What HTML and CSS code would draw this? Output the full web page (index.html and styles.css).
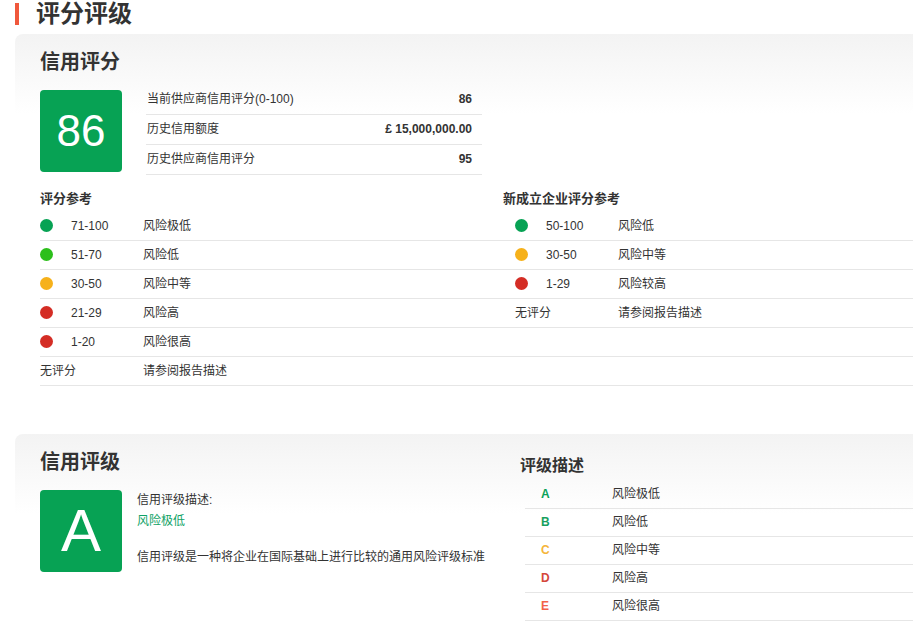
FILE: index.html
```html
<!DOCTYPE html>
<html lang="zh-CN">
<head>
    <meta charset="UTF-8">
    <meta name="viewport" content="width=device-width, initial-scale=1.0">
    <title>评分评级</title>
    <link rel="stylesheet" href="styles.css">
</head>
<body>
    <h1 class="page-title">评分评级</h1>

    <div class="card">
        <h2 class="card-title">信用评分</h2>
        <div class="score-row">
            <div class="score-box">86</div>
            <div class="score-table">
                <div class="score-line"><span>当前供应商信用评分(0-100)</span><b>86</b></div>
                <div class="score-line"><span>历史信用额度</span><b>£ 15,000,000.00</b></div>
                <div class="score-line"><span>历史供应商信用评分</span><b>95</b></div>
            </div>
        </div>

        <div class="ref">
            <div class="ref-new">
                <h3 class="ref-title">新成立企业评分参考</h3>
                <div class="ref-line"><i class="dot green"></i><span class="range">50-100</span>风险低</div>
                <div class="ref-line"><i class="dot yellow"></i><span class="range">30-50</span>风险中等</div>
                <div class="ref-line"><i class="dot red"></i><span class="range">1-29</span>风险较高</div>
                <div class="ref-line"><span class="none">无评分</span>请参阅报告描述</div>
            </div>
            <h3 class="ref-title">评分参考</h3>
            <div class="ref-line"><i class="dot green"></i><span class="range">71-100</span>风险极低</div>
            <div class="ref-line"><i class="dot lime"></i><span class="range">51-70</span>风险低</div>
            <div class="ref-line"><i class="dot yellow"></i><span class="range">30-50</span>风险中等</div>
            <div class="ref-line"><i class="dot red"></i><span class="range">21-29</span>风险高</div>
            <div class="ref-line"><i class="dot red"></i><span class="range">1-20</span>风险很高</div>
            <div class="ref-line"><span class="none">无评分</span>请参阅报告描述</div>
        </div>
    </div>

    <div class="card">
        <div class="rating">
            <div class="rating-main">
                <h2 class="card-title">信用评级</h2>
                <div class="rating-row">
                    <div class="score-box grade">A</div>
                    <div class="rating-info">
                        <p>信用评级描述:</p>
                        <p class="good">风险极低</p>
                        <p class="note">信用评级是一种将企业在国际基础上进行比较的通用风险评级标准</p>
                    </div>
                </div>
            </div>
            <div class="rating-desc">
                <h3 class="desc-title">评级描述</h3>
                <div class="desc-line"><b class="g-a">A</b>风险极低</div>
                <div class="desc-line"><b class="g-b">B</b>风险低</div>
                <div class="desc-line"><b class="g-c">C</b>风险中等</div>
                <div class="desc-line"><b class="g-d">D</b>风险高</div>
                <div class="desc-line"><b class="g-e">E</b>风险很高</div>
            </div>
        </div>
    </div>
</body>
</html>
```
FILE: styles.css
```css
body {
    margin: 0;
    overflow-x: hidden;
    font-family: "Liberation Sans", "Noto Sans CJK SC", sans-serif;
    font-size: 12px;
    color: #333;
}
h1, h2, h3, p {
    margin: 0;
}
.page-title {
    margin: 3px 0 0 15px;
    padding-left: 17px;
    border-left: 4px solid #f0583c;
    font-size: 24px;
    line-height: 22px;
}
.card {
    margin: 9px -20px 0 15px;
    padding: 14px 0 24px 25px;
    border-radius: 8px;
    background: linear-gradient(#f3f3f3, #fff 80px);
}
.card + .card {
    margin-top: 24px;
}
.card-title {
    font-size: 20px;
    line-height: 28px;
}
.score-row {
    display: flex;
    margin-top: 9px;
}
.score-box {
    width: 82px;
    height: 82px;
    margin-top: 5px;
    border-radius: 4px;
    background: #07a254;
    color: #fff;
    font-size: 44px;
    line-height: 82px;
    text-align: center;
}
.score-table {
    width: 336px;
    margin-left: 24px;
}
.score-line {
    display: flex;
    justify-content: space-between;
    height: 29px;
    padding: 0 10px 0 1px;
    border-bottom: 1px solid #e6e6e6;
    line-height: 29px;
}
.ref {
    display: flow-root;
    margin-top: 11px;
}
.ref-new {
    float: right;
    width: calc(100% - 450px);
}
.ref-new .ref-title {
    padding-left: 13px;
}
.ref-new .ref-line {
    padding-left: 25px;
}
.ref-title {
    font-size: 13px;
    line-height: 26px;
}
.ref-line {
    height: 28px;
    border-bottom: 1px solid #e6e6e6;
    line-height: 28px;
    white-space: nowrap;
}
.dot {
    display: inline-block;
    width: 13px;
    height: 13px;
    margin-right: 18px;
    border-radius: 50%;
    vertical-align: -2px;
}
.green { background: #07a254; }
.lime { background: #2cbf1b; }
.yellow { background: #f6b11a; }
.red { background: #d42d25; }
.range {
    display: inline-block;
    width: 72px;
}
.none {
    display: inline-block;
    width: 103px;
}
.rating {
    display: flex;
    gap: 25px;
}
.rating-main {
    flex: 0 0 455px;
}
.rating-row {
    display: flex;
    margin-top: 14px;
}
.grade {
    margin-top: 0;
    font-size: 60px;
}
.rating-info {
    margin-left: 15px;
    line-height: 21px;
}
.good {
    color: #0fa266;
}
.note {
    margin-top: 15px;
}
.rating-desc {
    flex: 1;
    padding-top: 6px;
}
.desc-title {
    font-size: 16px;
    line-height: 24px;
    margin-bottom: 3px;
}
.desc-line {
    height: 27px;
    margin-left: 5px;
    padding-left: 16px;
    border-bottom: 1px solid #e6e6e6;
    line-height: 27px;
}
.desc-line b {
    display: inline-block;
    width: 71px;
}
.g-a { color: #0aa25a; }
.g-b { color: #17a05e; }
.g-c { color: #f5b53a; }
.g-d { color: #d4473b; }
.g-e { color: #f26249; }
```
